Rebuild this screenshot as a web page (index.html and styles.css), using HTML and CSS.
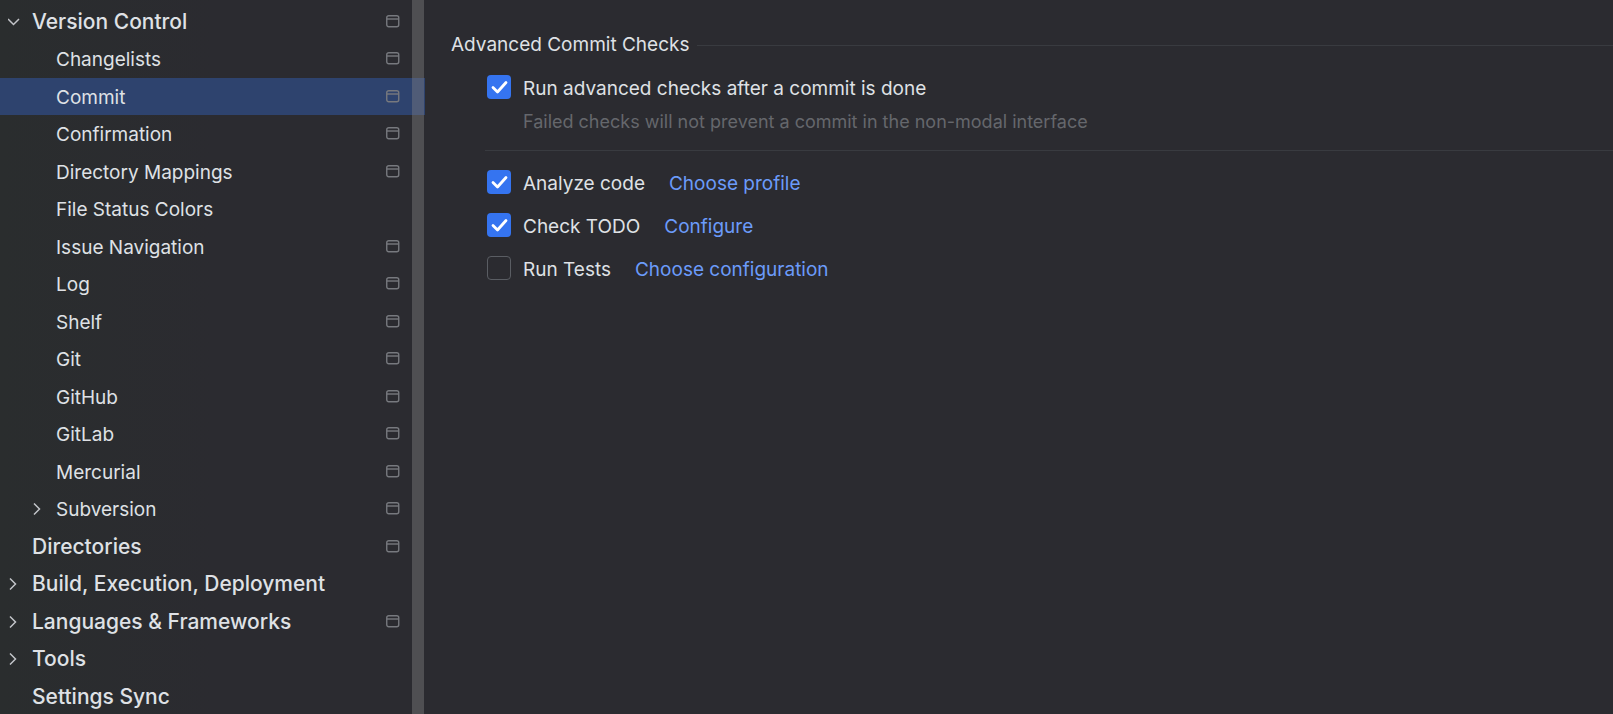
FILE: index.html
```html
<!DOCTYPE html>
<html lang="en">
<head>
<meta charset="utf-8">
<title>Settings – Commit</title>
<link rel="stylesheet" href="styles.css">
</head>
<body>
<svg class="defs" aria-hidden="true">
  <symbol id="project" viewBox="0 0 14 14"><rect x=".75" y=".75" width="12" height="11" rx="2"/><path d="M.75 4h12"/></symbol>
  <symbol id="right" viewBox="0 0 12 12"><path d="M2 .5 7.500 6 2 11.500"/></symbol>
  <symbol id="down" viewBox="0 0 12 12"><path d="M0 3 5.500 8.500 11 3"/></symbol>
</svg>
<div class="settings">
  <nav class="sidebar" aria-label="Settings">
    <ul class="tree">
      <li class="row group"><svg class="arrow"><use href="#down"/></svg><span class="name">Version Control</span><svg class="badge"><use href="#project"/></svg></li>
      <li class="row child"><span class="name">Changelists</span><svg class="badge"><use href="#project"/></svg></li>
      <li class="row child selected" aria-current="page"><span class="name">Commit</span><svg class="badge"><use href="#project"/></svg></li>
      <li class="row child"><span class="name">Confirmation</span><svg class="badge"><use href="#project"/></svg></li>
      <li class="row child"><span class="name">Directory Mappings</span><svg class="badge"><use href="#project"/></svg></li>
      <li class="row child"><span class="name">File Status Colors</span></li>
      <li class="row child"><span class="name">Issue Navigation</span><svg class="badge"><use href="#project"/></svg></li>
      <li class="row child"><span class="name">Log</span><svg class="badge"><use href="#project"/></svg></li>
      <li class="row child"><span class="name">Shelf</span><svg class="badge"><use href="#project"/></svg></li>
      <li class="row child"><span class="name">Git</span><svg class="badge"><use href="#project"/></svg></li>
      <li class="row child"><span class="name">GitHub</span><svg class="badge"><use href="#project"/></svg></li>
      <li class="row child"><span class="name">GitLab</span><svg class="badge"><use href="#project"/></svg></li>
      <li class="row child"><span class="name">Mercurial</span><svg class="badge"><use href="#project"/></svg></li>
      <li class="row child parent"><svg class="arrow"><use href="#right"/></svg><span class="name">Subversion</span><svg class="badge"><use href="#project"/></svg></li>
      <li class="row group leaf"><span class="name">Directories</span><svg class="badge"><use href="#project"/></svg></li>
      <li class="row group"><svg class="arrow"><use href="#right"/></svg><span class="name">Build, Execution, Deployment</span></li>
      <li class="row group"><svg class="arrow"><use href="#right"/></svg><span class="name">Languages &amp; Frameworks</span><svg class="badge"><use href="#project"/></svg></li>
      <li class="row group"><svg class="arrow"><use href="#right"/></svg><span class="name">Tools</span></li>
      <li class="row group leaf"><span class="name">Settings Sync</span></li>
    </ul>
    <div class="scrollbar"></div>
  </nav>
  <main class="content">
    <h1 class="title">Advanced Commit Checks</h1>
    <div class="options">
      <div class="option"><input class="check" type="checkbox" id="advanced" checked><label for="advanced">Run advanced checks after a commit is done</label></div>
      <p class="hint">Failed checks will not prevent a commit in the non-modal interface</p>
      <hr class="rule">
      <div class="checks">
        <div class="option"><input class="check" type="checkbox" id="analyze" checked><label for="analyze">Analyze code</label><a class="link" href="#profile">Choose profile</a></div>
        <div class="option"><input class="check" type="checkbox" id="todo" checked><label for="todo">Check TODO</label><a class="link" href="#configure">Configure</a></div>
        <div class="option"><input class="check" type="checkbox" id="tests"><label for="tests">Run Tests</label><a class="link" href="#configuration">Choose configuration</a></div>
      </div>
    </div>
  </main>
</div>
</body>
</html>
```
FILE: styles.css
```css
* { box-sizing: border-box; }
body {
  margin: 0;
  background: #2b2b30;
  color: #dfe1e5;
  font: 19px/24px Inter, sans-serif;
}
.defs { position: absolute; width: 0; height: 0; }
.settings { display: flex; height: 100vh; overflow: hidden; }
.sidebar {
  position: relative;
  flex: none;
  width: 425px;
  padding-top: 3px;
  background: linear-gradient(90deg, #2a2d2e, #2b2b30 50%);
}
.tree { margin: 0; padding: 0; list-style: none; }
.row { display: flex; align-items: center; height: 37px; padding: 0 25px 0 8px; }
.row:nth-child(even) { height: 38px; }
.group { gap: 12px; font-size: 21px; font-weight: 500; }
.leaf { padding-left: 32px; }
.child { padding-left: 56px; }
.child .name { padding-top: 2px; }
.parent { gap: 12px; padding-left: 32px; }
.selected { background: #2e436e; }
.name { flex: 1; white-space: nowrap; }
.arrow { width: 12px; height: 12px; fill: none; stroke: #c2c4c9; stroke-width: 1.500; }
.badge { width: 14px; height: 14px; fill: none; stroke: #77797e; stroke-width: 1.400; }
.scrollbar {
  position: absolute;
  top: 0;
  right: 1px;
  bottom: 0;
  width: 12px;
  background: rgba(128, 128, 132, .42);
}
.content { flex: 1; min-width: 0; padding: 33px 0 0 26px; }
.title {
  display: flex;
  align-items: center;
  gap: 8px;
  margin: 0;
  font-size: 19px;
  font-weight: 400;
}
.title::after { content: ""; flex: 1; height: 1px; background: #393b40; }
.options { padding: 16px 0 0 34px; }
.option { display: flex; align-items: center; padding-left: 2px; }
.option label, .link { padding-top: 4px; }
.check {
  appearance: none;
  flex: none;
  width: 24px;
  height: 24px;
  margin: 0 12px 0 0;
  border: 1px solid #5a5d63;
  border-radius: 4px;
}
.check:checked {
  border: 0;
  background: #3574f0 url("data:image/svg+xml,%3Csvg xmlns='http://www.w3.org/2000/svg' viewBox='0 0 24 24'%3E%3Cpath d='M6 12.500 10.500 17 19 7.500' fill='none' stroke='white' stroke-width='2.800' stroke-linecap='round' stroke-linejoin='round'/%3E%3C/svg%3E");
}
.hint { margin: 9px 0 0 38px; color: #65676c; font-size: 18px; line-height: 24px; }
.rule { height: 1px; margin: 16px 0 17px; border: 0; background: #393b40; }
.checks { display: grid; gap: 15px; }
.link { margin-left: 24px; color: #6b9bfa; text-decoration: none; }
```
